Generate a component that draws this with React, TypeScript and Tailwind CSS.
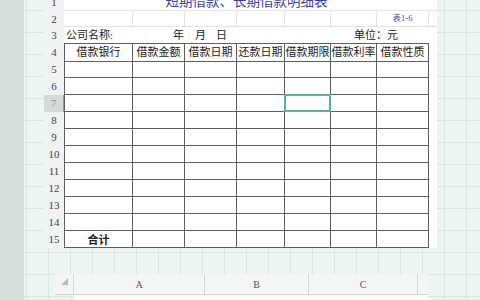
import React from 'react';

const headers = ['借款银行', '借款金额', '借款日期', '还款日期', '借款期限', '借款利率', '借款性质'];
const cjk = "font-['Liberation_Serif','Noto_Sans_CJK_SC',serif]";
const gridCols = 'grid grid-cols-[69px_52px_52px_48px_46px_46px_52px_8px]';

function RowHead({ n, h, active }: { n: number; h: string; active?: boolean }) {
  return (
    <div
      className={`w-[20px] ${h} flex items-center justify-center text-[11px] font-['Liberation_Serif',serif] ${
        active ? 'bg-[#d5d9d7] text-[#6fa892] border-r border-[#5cb893]' : 'bg-[#f1f3f2] text-[#444]'
      }`}
    >
      {n}
    </div>
  );
}

function TableRow({ n, first, children }: { n: number; first?: boolean; children?: (i: number) => React.ReactNode }) {
  const h = first ? 'h-[18px]' : 'h-[17px]';
  return (
    <div className="flex">
      <RowHead n={n} h={h} active={n === 7} />
      <div className={`${gridCols} ${h} bg-white`}>
        {Array.from({ length: 8 }).map((_, i) =>
          i < 7 ? (
            <div
              key={i}
              className={`relative border-r border-b border-[#5e5e5e] ${i === 0 ? 'border-l' : ''} ${
                first ? 'border-t' : ''
              } flex items-center justify-center overflow-visible`}
            >
              {children ? children(i) : null}
              {n === 7 && i === 4 && (
                <div className="absolute -inset-px border-2 border-[#55b892]" />
              )}
            </div>
          ) : (
            <div key={i} />
          )
        )}
      </div>
    </div>
  );
}

export default function App() {
  return (
    <div className="w-[480px] h-[300px] overflow-hidden flex bg-[#edf5f3] bg-[linear-gradient(#d8e7e3_1px,transparent_1px),linear-gradient(90deg,#d8e7e3_1px,transparent_1px)] bg-[size:22px_22px] bg-[position:4px_10px]">
      <div className="w-[24px] shrink-0 bg-[#d6dfdb]" />
      <div className="flex-1 flex flex-col pl-[20px]">
        {/* sheet */}
        <div className="-mt-[6px] w-[393px] flex flex-col">
          {/* row 1 title */}
          <div className="flex">
            <RowHead n={1} h="h-[17px]" />
            <div className="w-[373px] h-[17px] bg-white border-b border-[#e2e2e2] flex">
              <div className={`w-[365px] flex items-center justify-center text-[13.5px] text-[#3b40a8] leading-none -mt-[1px] ${cjk}`}>
                短期借款、长期借款明细表
              </div>
            </div>
          </div>
          {/* row 2 */}
          <div className="flex">
            <RowHead n={2} h="h-[16px]" />
            <div className={`${gridCols} h-[16px] bg-white border-b border-[#e2e2e2]`}>
              {Array.from({ length: 8 }).map((_, i) => (
                <div key={i} className={`${i < 7 ? 'border-r border-[#e2e2e2]' : ''} flex items-center justify-center`}>
                  {i === 6 && (
                    <span className={`text-[8.5px] text-[#4446a8] ${cjk}`}>表1-6</span>
                  )}
                </div>
              ))}
            </div>
          </div>
          {/* row 3 */}
          <div className="flex">
            <RowHead n={3} h="h-[16px]" />
            <div className={`w-[373px] h-[16px] bg-white flex items-center text-[11px] text-[#222] ${cjk}`}>
              <span className="ml-[2px] w-[107px]">公司名称:</span>
              <span className="w-[22px]">年</span>
              <span className="w-[21px]">月</span>
              <span className="w-[138px]">日</span>
              <span>单位：元</span>
            </div>
          </div>
          {/* table */}
          <TableRow n={4} first>
            {(i) => (
              <span className={`text-[11px] text-[#222] whitespace-nowrap ${cjk}`}>{headers[i]}</span>
            )}
          </TableRow>
          {Array.from({ length: 10 }).map((_, k) => (
            <TableRow key={k} n={k + 5} />
          ))}
          <TableRow n={15}>
            {(i) =>
              i === 0 ? (
                <span className={`self-end text-[11px] font-bold text-[#222] leading-none mb-[1px] ${cjk}`}>合计</span>
              ) : null
            }
          </TableRow>
        </div>

        {/* column header strip */}
        <div className="mt-[26px] ml-[11px] w-[373px] h-[21px] bg-[#f4f5f6] border-b border-[#cfd1d2] flex items-center text-[10px] text-[#555] font-['Liberation_Serif',serif]">
          <div className="w-[19px] h-full flex items-start justify-center pt-[4px] border-r border-[#d4d6d7]">
            <svg width="7" height="7" viewBox="0 0 7 7">
              <path d="M7 0 L7 7 L0 7 Z" fill="#b9bcbe" />
            </svg>
          </div>
          <div className="w-[131px] h-full flex items-center justify-center border-r border-[#d4d6d7]">A</div>
          <div className="w-[104px] h-full flex items-center justify-center border-r border-[#d4d6d7]">B</div>
          <div className="w-[109px] h-full flex items-center justify-center border-r border-[#d4d6d7]">C</div>
        </div>
        <div className="ml-[30px] w-[354px] flex-1 bg-[#fbfbfb]" />
      </div>
    </div>
  );
}
